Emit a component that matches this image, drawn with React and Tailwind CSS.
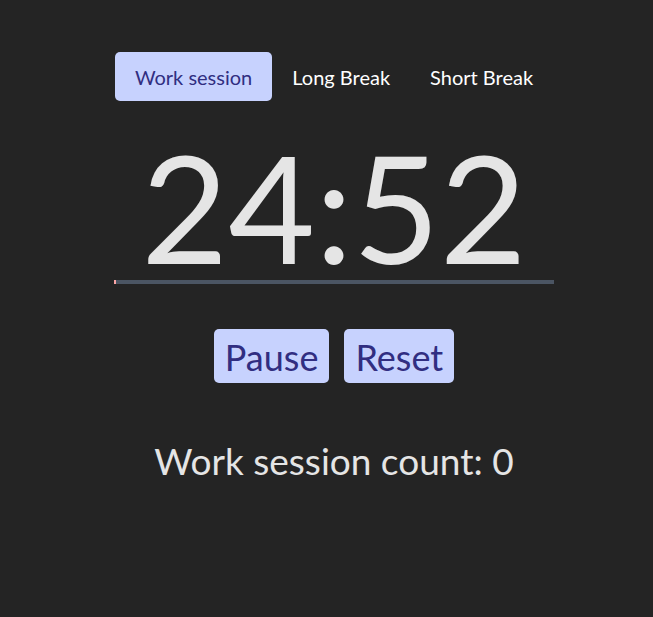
import React, { useState } from 'react';

const TABS = ['Work session', 'Long Break', 'Short Break'];

export default function App() {
  const [active, setActive] = useState(0);

  return (
    <div className="min-h-screen bg-[#242424] text-[#e5e5e5] font-['Lato',sans-serif]">
      <div className="flex flex-col items-center pl-[15px] pt-[52px]">
        {/* Mode tabs */}
        <div className="flex">
          {TABS.map((tab, i) => (
            <button
              key={tab}
              onClick={() => setActive(i)}
              className={
                i === active
                  ? 'h-[49px] px-5 rounded-[5px] text-[20px] leading-[51px] bg-[#c7d2fe] text-[#312e81]'
                  : 'h-[49px] px-5 rounded-[5px] text-[20px] leading-[51px] text-white'
              }
            >
              {tab}
            </button>
          ))}
        </div>

        {/* Timer */}
        <div className="mt-[35px] text-[150px] leading-[140px] text-[#e5e5e5]">24:52</div>

        {/* Progress */}
        <div className="mt-[4px] w-[440px] h-1 bg-[#4b5563]">
          <div className="h-full w-[2px] bg-[#fca5a5]" />
        </div>

        {/* Controls */}
        <div className="mt-[45px] flex gap-[15px]">
          <button className="h-[54px] px-[11px] rounded-[5px] text-[36px] leading-[56px] bg-[#c7d2fe] text-[#312e81]">
            Pause
          </button>
          <button className="h-[54px] px-[11px] rounded-[5px] text-[36px] leading-[56px] bg-[#c7d2fe] text-[#312e81]">
            Reset
          </button>
        </div>

        <div className="mt-[51px] text-[37px] leading-[54px]">Work session count: 0</div>
      </div>
    </div>
  );
}
